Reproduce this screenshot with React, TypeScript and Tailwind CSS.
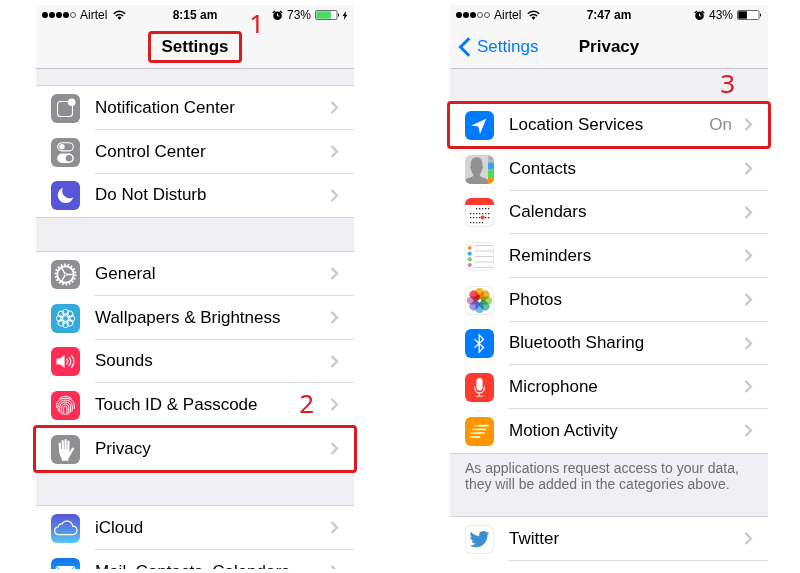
import type { ReactNode } from "react";

type RowItem = {
  label: string;
  icon: ReactNode;
  value?: string;
  highlighted?: boolean;
  callout?: string;
};

const ANGLES = [0, 45, 90, 135, 180, 225, 270, 315];

const PETALS = [
  { angle: 0, color: "#f7b32b" },
  { angle: 45, color: "#e3b52c" },
  { angle: 90, color: "#a5dc6a" },
  { angle: 135, color: "#62bfa2" },
  { angle: 180, color: "#6db9f2" },
  { angle: 225, color: "#9d95e0" },
  { angle: 270, color: "#d193c6" },
  { angle: 315, color: "#f25555" },
];

// [x, y] of each day on the calendar icon
const CALENDAR_DAYS = [
  ...[11, 14, 17, 20, 23].map((x) => [x, 10]),
  ...[5, 8, 11, 14, 17, 20, 23].map((x) => [x, 15]),
  ...[5, 8, 11, 14, 20, 23].map((x) => [x, 19]),
  ...[5, 8, 11, 14, 17].map((x) => [x, 24]),
];

function Tile({
  className,
  children,
}: {
  className: string;
  children: ReactNode;
}) {
  return (
    <span
      className={`block size-[29px] shrink-0 overflow-hidden rounded-md ${className}`}
    >
      <svg viewBox="0 0 29 29" className="size-full" aria-hidden="true">
        {children}
      </svg>
    </span>
  );
}

const whiteTile = "bg-white ring-1 ring-inset ring-[#ececee]";

const NotificationIcon = () => (
  <Tile className="bg-[#8e8e93]">
    <path
      d="M17 7.500H9.500a3 3 0 0 0-3 3v9a3 3 0 0 0 3 3h9a3 3 0 0 0 3-3V12"
      fill="none"
      stroke="#fff"
      strokeWidth="1.100"
    />
    <circle cx="20.700" cy="8.300" r="3.800" fill="#fff" />
  </Tile>
);

const ControlCenterIcon = () => (
  <Tile className="bg-[#8e8e93]">
    <rect
      x="6.700"
      y="4.700"
      width="15.600"
      height="8.200"
      rx="4.100"
      fill="none"
      stroke="#fff"
      strokeWidth="1.100"
    />
    <circle cx="11" cy="8.800" r="2.700" fill="#fff" />
    <rect x="6.200" y="15.600" width="16.600" height="9.400" rx="4.700" fill="#fff" />
    <circle cx="18" cy="20.300" r="3.300" fill="#8e8e93" />
  </Tile>
);

const MoonIcon = () => (
  <Tile className="bg-[#5856d6]">
    <path
      d="M12 6.700a7.900 7.900 0 1 0 10.300 9.500A7.300 7.300 0 0 1 12 6.700z"
      fill="#fff"
    />
  </Tile>
);

const GearIcon = () => (
  <Tile className="bg-[#8e8e93]">
    <g fill="none" stroke="#fff">
      <circle
        cx="14.500"
        cy="14.500"
        r="9.900"
        strokeWidth="2.200"
        strokeDasharray="1.700 1.756"
      />
      <circle cx="14.500" cy="14.500" r="8.200" strokeWidth="1.900" />
      <circle cx="14.500" cy="14.500" r="1.300" strokeWidth="1" />
      <path
        d="M15.800 14.500H22M13.800 13.300l-3.300-5.600M13.800 15.700l-3.300 5.600"
        strokeWidth="1.300"
      />
    </g>
  </Tile>
);

const WallpaperIcon = () => (
  <Tile className="bg-[#34aadc]">
    <g fill="none" stroke="#fff" strokeWidth="1">
      {ANGLES.map((angle) => (
        <circle
          key={angle}
          cx="14.500"
          cy="8.200"
          r="2.900"
          transform={`rotate(${angle} 14.500 14.500)`}
        />
      ))}
      <circle cx="14.500" cy="14.500" r="2.900" />
      <circle cx="14.500" cy="14.500" r="5" strokeWidth="0.600" />
    </g>
  </Tile>
);

const SoundsIcon = () => (
  <Tile className="bg-[#ff2d55]">
    <path d="M5.500 11.500h3.600L13.600 8v13l-4.500-3.500H5.500z" fill="#fff" />
    <g fill="none" stroke="#fff" strokeWidth="1.300" strokeLinecap="round">
      <path d="M15.800 12.200a3.600 3.600 0 0 1 0 4.600" />
      <path d="M18.200 10.400a6.300 6.300 0 0 1 0 8.200" />
      <path d="M20.600 8.600a9 9 0 0 1 0 11.800" />
    </g>
  </Tile>
);

const TouchIdIcon = () => (
  <Tile className="bg-[#ff2d55]">
    <g fill="none" stroke="#fff" strokeWidth="0.950" strokeLinecap="round">
      <path d="M8.500 7.400a9.200 9.200 0 0 1 12 0" />
      <path d="M5.600 16.500c-.7-4 1.300-9.300 8.900-9.300s9.700 5.400 8.700 10.400" />
      <path d="M7.300 19.800c-1.300-6 1.200-10.700 7.200-10.700s8 5 6.400 11.200" />
      <path d="M9.200 21.800c-1.500-6-.4-10.800 5.300-10.800 5.400 0 6 5 4.300 11" />
      <path d="M11.200 23c-1.300-5.700-1-10 3.300-10 4 0 3.800 5 2.400 10.200" />
      <path d="M13.100 23.600c-.9-4.800-1-8.600 1.400-8.600 2.200 0 1.600 4.600.6 8.600" />
    </g>
  </Tile>
);

const HandIcon = () => (
  <Tile className="bg-[#8e8e93]">
    <g stroke="#fff" strokeLinecap="round" fill="none">
      <path
        d="M8.700 8.500l.5 8M11.600 6l.4 9M14.600 5.200v9.500M17.500 6.500l-.3 9"
        strokeWidth="2.200"
      />
      <path d="M21.900 13.700l-3.400 5.500" strokeWidth="2.300" />
    </g>
    <path
      d="M8.100 14h10.200v3.500l2.600-2c-.6 3.600-2 6.300-3.600 8.200v2h-6.500v-2c-1.800-2-2.600-5-2.700-9.700z"
      fill="#fff"
    />
  </Tile>
);

const CloudIcon = () => (
  <Tile className="bg-linear-to-b from-[#5856d6] via-[#5286e4] to-[#5ac8fa]">
    <path
      d="M7.800 20.700a3.900 3.900 0 0 1-.6-7.800 3.300 3.300 0 0 1 3.900-2.900 5.600 5.600 0 0 1 10.500 2.100 4.300 4.300 0 0 1 .2 8.600z"
      fill="none"
      stroke="#fff"
      strokeWidth="1.200"
    />
  </Tile>
);

const MailIcon = () => (
  <Tile className="bg-linear-to-b from-[#1a70f0] to-[#1ac8fb]">
    <rect x="4.800" y="8" width="19.400" height="13.500" rx="1" fill="#fff" />
    <path
      d="M5 8.300l9.500 8 9.500-8M5 21.200l7-7M24 21.200l-7-7"
      fill="none"
      stroke="#1a7df2"
      strokeWidth="0.800"
    />
  </Tile>
);

const LocationIcon = () => (
  <Tile className="bg-[#007aff]">
    <path d="M21.300 7.800L6 14.500l7.300 1.100 1.700 7.300z" fill="#fff" />
  </Tile>
);

const ContactsIcon = () => (
  <Tile className="bg-[#d5d5d6]">
    <path
      d="M0 29v-2.800c0-1.800 1.500-2.400 3.800-3.100 2.600-.8 4.600-1.300 4.600-3.600-1.300-1.500-2.100-3.300-2.300-5-1-.6-1.200-3.400-.3-3.800C5.300 5.600 7.800 2.200 11.500 2.200s6.300 3.400 5.800 8.500c.9.400.7 3.200-.3 3.800-.2 1.700-1 3.500-2.300 5 0 2.300 2 2.800 4.600 3.600 2.300.7 3.700 1.300 3.700 3.100V29z"
      fill="#919193"
    />
    <rect x="23" width="6" height="7.500" fill="#b9babc" />
    <rect x="23" y="7.500" width="6" height="7" fill="#3ba4ec" />
    <rect x="23" y="14.500" width="6" height="7.500" fill="#4cd964" />
    <rect x="23" y="22" width="6" height="7" fill="#ff9500" />
    <path d="M24.800 4h2M24.800 11h2" stroke="#777" strokeWidth="0.700" />
  </Tile>
);

const CalendarIcon = () => (
  <Tile className={whiteTile}>
    <rect width="29" height="7" fill="#ff3b30" />
    {CALENDAR_DAYS.map(([x, y]) => (
      <rect
        key={`${x}-${y}`}
        x={x}
        y={y}
        width="1.300"
        height="1.300"
        fill="#333"
      />
    ))}
    <circle cx="17.600" cy="19.600" r="2" fill="#ff3b30" />
  </Tile>
);

const RemindersIcon = () => (
  <Tile className={whiteTile}>
    <path
      d="M9.500 3.500H29M9.500 9H29M9.500 14.500H29M9.500 20H29M9.500 25.500H29"
      stroke="#d2d2d5"
      strokeWidth="1"
    />
    <circle cx="4.700" cy="6" r="2.100" fill="#f5a12c" />
    <circle cx="4.700" cy="11.600" r="2.100" fill="#45a8ea" />
    <circle cx="4.700" cy="17.300" r="2.100" fill="#6fce66" />
    <circle cx="4.700" cy="23" r="2.100" fill="#c283c0" />
  </Tile>
);

const PhotosIcon = () => (
  <Tile className={whiteTile}>
    {PETALS.map(({ angle, color }) => (
      <rect
        key={angle}
        x="10.400"
        y="2"
        width="8.200"
        height="11"
        rx="4.100"
        fill={color}
        className="mix-blend-multiply"
        transform={`rotate(${angle} 14.500 14.500)`}
      />
    ))}
    <path
      d="M14.500 14.500l-6-2.500 2.500-2.500 3.500-.5z"
      fill="#c4161c"
      opacity="0.800"
    />
    <circle cx="14.500" cy="14.500" r="1" fill="#fff" />
  </Tile>
);

const BluetoothIcon = () => (
  <Tile className="bg-[#007aff]">
    <path
      d="M9.500 10.200l9 8.300-4.300 4.600V5.900l4.300 4.600-9 8.300"
      fill="none"
      stroke="#fff"
      strokeWidth="1.300"
    />
  </Tile>
);

const MicrophoneIcon = () => (
  <Tile className="bg-[#ff3b30]">
    <rect x="11.500" y="5" width="6" height="12.500" rx="3" fill="#fff" />
    <path
      d="M9.700 13.500v1.700a4.800 4.800 0 0 0 9.600 0v-1.700M14.500 20v3M11.300 23.300h6.400"
      fill="none"
      stroke="#fff"
      strokeWidth="1.100"
    />
  </Tile>
);

const MotionIcon = () => (
  <Tile className="bg-[#ff9500]">
    <g fill="#ffe08a">
      <path d="M9.500 8l14.800-.6-.7 2H9z" />
      <path d="M7.500 11.800l14-.5-.7 2H7z" />
      <path d="M5.700 15.600l14.300-.5-.7 2H5.200z" />
      <path d="M4.300 19.400l11-.5-.7 2H3.800z" />
    </g>
    <path
      d="M13 8.600h10.500M11 12.500h9.800M9 16.300h10M7 20.100h7.500"
      stroke="#fff"
      strokeWidth="1.200"
    />
  </Tile>
);

const TwitterIcon = () => (
  <Tile className={whiteTile}>
    <path
      transform="translate(4.500 4.200) scale(0.830)"
      d="M23.950 4.570a10 10 0 0 1-2.820.77 4.960 4.960 0 0 0 2.160-2.720c-.95.550-2 .950-3.130 1.180a4.920 4.920 0 0 0-8.380 4.480C7.690 8.090 4.070 6.130 1.640 3.160a4.820 4.820 0 0 0-.67 2.470c0 1.710.87 3.210 2.190 4.100a4.900 4.900 0 0 1-2.230-.62v.06a4.920 4.920 0 0 0 3.950 4.830 5 5 0 0 1-2.210.080 4.940 4.940 0 0 0 4.600 3.420A9.870 9.870 0 0 1 0 19.540a13.990 13.990 0 0 0 7.550 2.210c9.050 0 14-7.500 14-13.980 0-.210 0-.420-.020-.630a9.940 9.940 0 0 0 2.460-2.550z"
      fill="#3c8fd0"
    />
  </Tile>
);

const FacebookIcon = () => (
  <Tile className="bg-[#4a7af0]">
    <path
      d="M16 29V17h-3v-4h3v-3c0-3 2-4.500 6-4v3.500c-2 0-2.500.5-2.500 2V13H22l-.5 4h-2v12z"
      fill="#fff"
    />
  </Tile>
);

const systemRows: RowItem[] = [
  { label: "Notification Center", icon: <NotificationIcon /> },
  { label: "Control Center", icon: <ControlCenterIcon /> },
  { label: "Do Not Disturb", icon: <MoonIcon /> },
];

const generalRows: RowItem[] = [
  { label: "General", icon: <GearIcon /> },
  { label: "Wallpapers & Brightness", icon: <WallpaperIcon /> },
  { label: "Sounds", icon: <SoundsIcon /> },
  { label: "Touch ID & Passcode", icon: <TouchIdIcon />, callout: "2" },
  { label: "Privacy", icon: <HandIcon />, highlighted: true },
];

const accountRows: RowItem[] = [
  { label: "iCloud", icon: <CloudIcon /> },
  { label: "Mail, Contacts, Calendars", icon: <MailIcon /> },
];

const privacyRows: RowItem[] = [
  {
    label: "Location Services",
    icon: <LocationIcon />,
    value: "On",
    highlighted: true,
  },
  { label: "Contacts", icon: <ContactsIcon /> },
  { label: "Calendars", icon: <CalendarIcon /> },
  { label: "Reminders", icon: <RemindersIcon /> },
  { label: "Photos", icon: <PhotosIcon /> },
  { label: "Bluetooth Sharing", icon: <BluetoothIcon /> },
  { label: "Microphone", icon: <MicrophoneIcon /> },
  { label: "Motion Activity", icon: <MotionIcon /> },
];

const socialRows: RowItem[] = [
  { label: "Twitter", icon: <TwitterIcon /> },
  { label: "Facebook", icon: <FacebookIcon /> },
];

function Callout({
  className,
  children,
}: {
  className: string;
  children: ReactNode;
}) {
  return (
    <span
      className={`absolute z-10 font-['Noto_Sans',sans-serif] text-[26px] leading-8 text-[#e0191f] ${className}`}
    >
      {children}
    </span>
  );
}

function Row({ label, icon, value, highlighted, callout }: RowItem) {
  return (
    <li className="group relative h-11 nth-[3n]:h-[43px]">
      <a href="#" className="flex h-full items-center gap-[15px] pl-[15px]">
        {icon}
        <span className="flex h-full min-w-0 flex-1 items-center border-b border-[#dcdce0] pr-[15px] group-last:border-transparent">
          <span className="flex-1">{label}</span>
          {value && <span className="mr-3 text-[#8e8e93]">{value}</span>}
          <svg
            width="9"
            height="13"
            viewBox="0 0 9 13"
            fill="none"
            stroke="#c7c7cc"
            strokeWidth="2.200"
            aria-hidden="true"
          >
            <path d="M1.500 1l5.500 5.500L1.500 12" />
          </svg>
        </span>
      </a>
      {callout && <Callout className="top-1 right-10">{callout}</Callout>}
      {highlighted && (
        <span className="pointer-events-none absolute -inset-x-[3px] -inset-y-0.5 z-10 rounded-sm border-3 border-[#dc1a20]" />
      )}
    </li>
  );
}

function RowGroup({ rows }: { rows: RowItem[] }) {
  return (
    <ul className="bg-white shadow-[0_-1px_0_#d3d3d7,0_1px_0_#d3d3d7]">
      {rows.map((row) => (
        <Row key={row.label} {...row} />
      ))}
    </ul>
  );
}

function StatusBar({
  signal,
  time,
  battery,
  charging,
}: {
  signal: number;
  time: string;
  battery: number;
  charging?: boolean;
}) {
  return (
    <div className="grid h-5 grid-cols-[1fr_auto_1fr] items-center px-1.5 text-xs">
      <div className="flex items-center gap-1">
        <svg width="34" height="8" viewBox="0 0 34 8" aria-hidden="true">
          {[0, 1, 2, 3, 4].map((dot) => (
            <circle
              key={dot}
              cx={3 + dot * 7}
              cy="4"
              r={dot < signal ? 3 : 2.5}
              fill={dot < signal ? "#000" : "none"}
              stroke={dot < signal ? "none" : "#333"}
              strokeWidth="0.800"
            />
          ))}
        </svg>
        <span>Airtel</span>
        <svg
          width="13"
          height="10"
          viewBox="0 0 13 10"
          className="ml-0.5"
          aria-hidden="true"
        >
          <g fill="none" stroke="#000" strokeWidth="1.500">
            <path d="M.8 3.700a8.100 8.100 0 0 1 11.400 0" />
            <path d="M2.900 6a5.100 5.100 0 0 1 7.200 0" />
          </g>
          <path d="M4.500 7.500a2.900 2.900 0 0 1 4 0l-2 2.200z" />
        </svg>
      </div>
      <span className="font-bold">{time}</span>
      <div className="flex items-center justify-end gap-1">
        <svg width="11" height="11" viewBox="0 0 11 11" aria-hidden="true">
          <circle cx="5.500" cy="5.700" r="4.300" />
          <path
            d="M.8 3L3 .9M10.200 3L8 .9"
            stroke="#000"
            strokeWidth="1.400"
          />
          <path
            d="M5.500 6V3.600M5.500 6h1.800"
            fill="none"
            stroke="#fff"
            strokeWidth="0.900"
          />
        </svg>
        <span>{battery}%</span>
        <svg width="25" height="10" viewBox="0 0 25 10" aria-hidden="true">
          <rect
            x="0.500"
            y="0.500"
            width="21.500"
            height="9"
            rx="1.200"
            fill="#fff"
            stroke="#444"
            strokeWidth="0.800"
          />
          <rect
            x="1.300"
            y="1.300"
            width={(battery / 100) * 20}
            height="7.400"
            fill={charging ? "#4cd964" : "#000"}
          />
          <path d="M23 3.200a2 2 0 0 1 0 3.600z" />
        </svg>
        {charging && (
          <svg
            width="6"
            height="9"
            viewBox="0 0 6 9"
            className="-ml-0.5"
            aria-hidden="true"
          >
            <path d="M4 0L.5 5h2L1.800 9 5.500 3.800h-2z" />
          </svg>
        )}
      </div>
    </div>
  );
}

export default function App() {
  return (
    <main className="grid h-screen grid-cols-2 gap-24 bg-white pt-[5px] pr-8 pb-1 pl-9 font-['Liberation_Sans',Arial,sans-serif] text-[17px] leading-5 text-black">
      {/* Settings */}
      <section className="relative min-h-0 min-w-0 overflow-y-clip bg-[#efeff4]">
        <header className="relative border-b border-[#c4c4c8] bg-[#f7f7f8]">
          <StatusBar signal={4} time="8:15 am" battery={73} charging />
          <div className="flex h-[43px] items-start justify-center pt-1.5">
            <h1 className="rounded-sm border-3 border-[#dc1a20] px-2.5 py-[3px] font-bold">
              Settings
            </h1>
          </div>
          <Callout className="top-0.5 right-[90px]">1</Callout>
        </header>
        <div className="flex flex-col gap-[35px] pt-[17px]">
          <RowGroup rows={systemRows} />
          <RowGroup rows={generalRows} />
          <RowGroup rows={accountRows} />
        </div>
      </section>

      {/* Privacy */}
      <section className="relative min-h-0 min-w-0 overflow-y-clip bg-[#efeff4]">
        <header className="relative border-b border-[#c4c4c8] bg-[#f7f7f8]">
          <StatusBar signal={3} time="7:47 am" battery={43} />
          <div className="grid h-[43px] grid-cols-[1fr_auto_1fr] items-center px-2">
            <a href="#" className="flex items-center gap-1.5 text-[#007aff]">
              <svg
                width="13"
                height="20"
                viewBox="0 0 13 20"
                fill="none"
                stroke="currentColor"
                strokeWidth="3"
                aria-hidden="true"
              >
                <path d="M11.200 1.300L2.500 10l8.700 8.700" />
              </svg>
              Settings
            </a>
            <h1 className="font-bold">Privacy</h1>
          </div>
        </header>
        <div className="relative pt-[34px]">
          <Callout className="-top-0.5 right-[33px]">3</Callout>
          <RowGroup rows={privacyRows} />
          <p className="px-[15px] pt-[7px] pb-[25px] text-sm leading-4 text-[#6d6d72]">
            As applications request access to your data, they will be added in
            the categories above.
          </p>
          <RowGroup rows={socialRows} />
        </div>
      </section>
    </main>
  );
}
